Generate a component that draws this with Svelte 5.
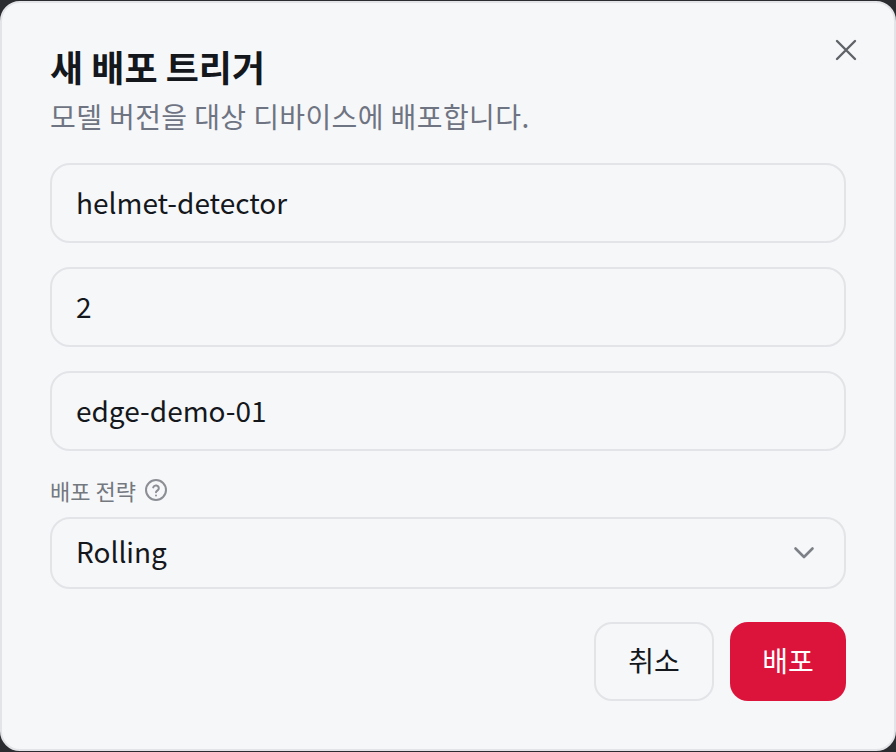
<script>
  const fields = ['helmet-detector', '2', 'edge-demo-01'];
</script>

<div class="page">
  <div class="dialog">
    <button class="close" aria-label="닫기">
      <svg viewBox="0 0 24 24" width="24" height="24" fill="none" stroke="#5f6368" stroke-width="2.4" stroke-linecap="round"><path d="M3 3 L21 21 M21 3 L3 21"/></svg>
    </button>
    <h2>새 배포 트리거</h2>
    <p class="sub">모델 버전을 대상 디바이스에 배포합니다.</p>
    <div class="fields">
      {#each fields as f}
        <div class="input">{f}</div>
      {/each}
    </div>
    <div class="label">
      <span>배포 전략</span>
      <svg viewBox="0 0 24 24" width="24" height="24" fill="none" stroke="#8b8e94" stroke-width="2" stroke-linecap="round" stroke-linejoin="round"><circle cx="12" cy="12" r="10"/><path d="M9.2 9.4a2.9 2.9 0 0 1 5.6 1c0 1.9-2.8 2.4-2.8 3.9"/><path d="M12 17.4h.01"/></svg>
    </div>
    <div class="select">
      <span>Rolling</span>
      <svg viewBox="0 0 24 24" width="24" height="24" fill="none" stroke="#7d8086" stroke-width="2.6" stroke-linecap="round" stroke-linejoin="round"><path d="M3.5 7.5 L12 16 L20.5 7.5"/></svg>
    </div>
    <div class="actions">
      <button class="btn cancel">취소</button>
      <button class="btn primary">배포</button>
    </div>
  </div>
</div>

<style>
  :global(body) {
    margin: 0;
    background: #2b2c2f;
  }
  .page {
    box-sizing: border-box;
    width: 896px;
    height: 752px;
    padding-top: 1px;
    padding-bottom: 1px;
    font-family: "Noto Sans CJK KR", sans-serif;
    color: #14171c;
  }
  .dialog {
    position: relative;
    box-sizing: border-box;
    height: 750px;
    padding: 41px 48px 0 48px;
    background: #f6f7f9;
    border: 2px solid #e3e4e7;
    border-radius: 20px;
  }
  .close {
    position: absolute;
    top: 35px;
    right: 36px;
    padding: 0;
    border: 0;
    background: none;
    display: flex;
  }
  h2 {
    margin: 0;
    font-size: 36px;
    line-height: 44px;
    font-weight: 700;
  }
  .sub {
    margin: 8px 0 0;
    font-size: 28px;
    line-height: 40px;
    letter-spacing: 0.4px;
    color: #6f7482;
  }
  .fields {
    display: flex;
    flex-direction: column;
    gap: 24px;
    margin-top: 27px;
  }
  .input, .select {
    box-sizing: border-box;
    border: 2px solid #e3e4e7;
    border-radius: 20px;
    padding: 0 24px 2px;
    display: flex;
    align-items: center;
    font-size: 28px;
  }
  .input {
    height: 80px;
  }
  .label {
    display: flex;
    align-items: center;
    gap: 8px;
    margin-top: 21px;
    height: 36px;
    font-size: 22px;
    color: #74787f;
  }
  .select {
    height: 72px;
    margin-top: 9px;
    justify-content: space-between;
    padding: 0 28px 4px 24px;
  }
  .select svg {
    margin-top: 4px;
  }
  .actions {
    display: flex;
    justify-content: flex-end;
    gap: 16px;
    margin-top: 33px;
  }
  .btn {
    box-sizing: border-box;
    height: 79px;
    border-radius: 18px;
    font-size: 28px;
    font-family: inherit;
    padding: 0 0 3px;
  }
  .cancel {
    width: 120px;
    background: transparent;
    border: 2px solid #e3e4e7;
    color: #14171c;
  }
  .primary {
    width: 116px;
    background: #dc143c;
    border: 0;
    color: #fff;
  }
</style>
